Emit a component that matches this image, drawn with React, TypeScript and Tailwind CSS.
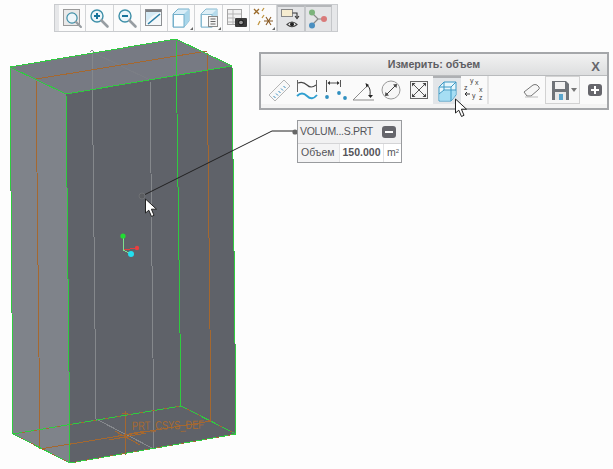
import React from "react";

const green = "#2fcb3f";
const orange = "#a5682f";

// arrow pointer, used twice over the model and the panel
const Cursor = ({ className }: { className: string }) => (
  <svg className={className} width="15" height="21" viewBox="0 0 15 21">
    <path d="M1.5 1 L1.5 15 L4.8 12.2 L7.5 18.5 L10 17.3 L7.4 11.2 L12.5 11.2 Z" fill="#fff" stroke="#222" strokeWidth="1" />
  </svg>
);

const Corner = () => <path d="M24 21 L24 24 L21 24 Z" fill="#666" />;

const Magnifier = ({ sign }: { sign?: "+" | "-" }) => (
  <>
    <circle cx="10" cy="10" r="6" fill="#eef6fa" stroke="#3d8fa8" strokeWidth="1.4" />
    <path d="M14.5 14.5 L20.5 20.5" stroke="#979da2" strokeWidth="2.6" strokeLinecap="round" />
    {sign && <path d="M7 10 H13" stroke="#17739a" strokeWidth="2" />}
    {sign === "+" && <path d="M10 7 V13" stroke="#17739a" strokeWidth="2" />}
  </>
);

const Cube = () => (
  <>
    <path d="M4 8 L9 3 H20 V15 L15 21 H4 Z" fill="#d8edf7" stroke="#74b0cb" strokeWidth="1" />
    <path d="M15 8 L20 3 V15 L15 21 Z" fill="#a9d6ea" />
    <rect x="4.5" y="8.5" width="10.5" height="12.5" fill="#fbfeff" stroke="#74b0cb" />
  </>
);

const topIcons: React.ReactNode[] = [
  <>
    <rect x="3.5" y="3.5" width="16" height="16" fill="#e9e9e9" stroke="#9a9a9a" />
    <g transform="translate(3.5 3.5) scale(0.85)"><Magnifier /></g>
  </>,
  <Magnifier sign="+" />,
  <Magnifier sign="-" />,
  <>
    <rect x="3.5" y="3.5" width="16" height="16" fill="#f4f8fa" stroke="#8c8f92" />
    <path d="M4 4 H19 V6 H4 Z" fill="#7d8084" />
    <path d="M4 6 H19 Q10 8 4 17 Z" fill="#d5ebf6" />
    <path d="M6 18 L18 8" stroke="#2a7fa6" strokeWidth="1.6" />
  </>,
  <>
    <Cube />
    <Corner />
  </>,
  <>
    <g opacity="0.85"><Cube /></g>
    <rect x="11.5" y="10.5" width="9" height="10" fill="#f4f4f4" stroke="#888" />
    <path d="M13.5 13 H18.5 M13.5 15.5 H18.5 M13.5 18 H18.5" stroke="#666" />
    <Corner />
  </>,
  <>
    <rect x="3.5" y="3.5" width="14" height="15" fill="#f2f2f2" stroke="#a5a5a5" />
    <path d="M4 8 H17 M4 12 H11 M4 16 H11 M9 4 V18" stroke="#b5b5b5" />
    <rect x="11" y="12" width="12" height="9" rx="1" fill="#3a3a3a" />
    <circle cx="17" cy="16.5" r="2.4" fill="#999" stroke="#111" />
  </>,
  <>
    <path d="M3 3 L8 8 M8 3 L3 8" stroke="#9a6a2a" strokeWidth="1.3" />
    <path d="M11 5 L13 2 M7 19 L9 15 M11 12 L13 9" stroke="#c09540" strokeWidth="1.3" />
    <path d="M13 15 H22 M15 11 L20 19 M20 11 L15 19" stroke="#8a5a24" strokeWidth="1.1" />
    <Corner />
  </>,
  <>
    <rect x="2.5" y="2.5" width="11" height="7" fill="#f6ecd0" stroke="#888" />
    <path d="M13.5 6 H18 V10 M16 9 L18 11.5 L20 9" fill="none" stroke="#333" strokeWidth="1.1" />
    <path d="M8 17.5 Q13 12.5 18 17.5 Q13 22 8 17.5 Z" fill="#eee" stroke="#444" strokeWidth="1.1" />
    <circle cx="13" cy="17.3" r="2" fill="#222" />
  </>,
  <>
    <path d="M6 6 L12 12 H18 M12 12 L6 18" fill="none" stroke="#888" strokeWidth="1.2" />
    <circle cx="6" cy="5.5" r="3" fill="#7cb37c" />
    <circle cx="6" cy="18.5" r="3" fill="#4a8fc0" />
    <circle cx="18" cy="12" r="3" fill="#d97a7a" />
  </>,
];

const Ruler = () => (
  <>
    <path d="M2 17 L17 2 L23 8 L8 23 Z" fill="#f8f8f8" stroke="#b5b5b5" />
    <path d="M6.5 18 L8.5 20 M9 15.5 L11 17.5 M11.5 13 L13.5 15 M14 10.5 L16 12.5 M16.5 8 L18.5 10" stroke="#3a8fc0" />
  </>
);
const Wave = () => (
  <>
    <path d="M2.5 2 V14 M21.5 2 V14" stroke="#666" />
    <path d="M3 5 Q8 3 12 7 T21 7" fill="none" stroke="#444" strokeWidth="1.1" />
    <path d="M2 18 Q7 13 12 18 T22 17" fill="none" stroke="#2f9fd0" strokeWidth="1.9" />
  </>
);
const Distance = () => (
  <>
    <path d="M3.5 2 V14 M17.5 2 V9 M5 5 H16" stroke="#555" />
    <path d="M7 3 L4.5 5 L7 7 Z M14 3 L16.5 5 L14 7 Z" fill="#333" />
    <circle cx="4" cy="19" r="1.9" fill="#2f8fc0" />
    <circle cx="16" cy="15" r="1.9" fill="#2f8fc0" />
    <circle cx="22" cy="20" r="1.9" fill="#2f8fc0" />
  </>
);
const Angle = () => (
  <>
    <path d="M2 22 L16 8 M2 22 H23" stroke="#8a8a8a" strokeWidth="1" fill="none" />
    <path d="M16 7 Q20 10 19 17" stroke="#333" fill="none" strokeWidth="1" />
    <path d="M14.5 5 L18 7 L15.5 9.5 Z M17 17 H22 L19.5 20 Z" fill="#222" />
  </>
);
const Diameter = () => (
  <>
    <circle cx="12" cy="12" r="9" fill="#f6f6f6" stroke="#999" />
    <path d="M7 17 L17 7" stroke="#444" />
    <path d="M6 18 L6.5 14 L10 17.5 Z M18 6 L17.5 10 L14 6.5 Z" fill="#444" />
  </>
);
const BoxArrows = () => (
  <>
    <rect x="3.5" y="3.5" width="17" height="17" fill="#f6f6f6" stroke="#666" />
    <path d="M6 6 L18 18 M18 6 L6 18" stroke="#555" />
    <path d="M5 5 H8.5 L5 8.5 Z M19 5 H15.5 L19 8.5 Z M5 19 H8.5 L5 15.5 Z M19 19 H15.5 L19 15.5 Z" fill="#444" />
  </>
);
const VolumeCube = () => (
  <>
    <path d="M4 8 L9 3 H21 V16 L16 22 H4 Z" fill="#e6f6fc" stroke="#3b98c4" />
    <path d="M4.5 15 L9 11.5 H20.5 V16 L16 21.5 H4.5 Z" fill="#a6def4" />
    <path d="M4 8 H16 V22 M16 8 L21 3 M9 3 V11 H21 M9 11 L4 15" fill="none" stroke="#3b98c4" />
  </>
);
const Axes = () => (
  <svg width="24" height="24" viewBox="0 0 24 24">
    <path d="M3.5 16 H8 M5 14 L3 16 L5 18" stroke="#333" fill="none" />
    <text fontFamily="'Liberation Sans', sans-serif" fontSize="7" fill="#444">
      <tspan x="8" y="5">y</tspan>
      <tspan x="13" y="7">x</tspan>
      <tspan x="2" y="12">z</tspan>
      <tspan x="10" y="20">y</tspan>
      <tspan x="17" y="14">x</tspan>
      <tspan x="17" y="22">z</tspan>
    </text>
  </svg>
);

const measureIcons = [Ruler, Wave, Distance, Angle, Diameter, BoxArrows, VolumeCube];

const Pill = ({ sign }: { sign: "+" | "-" }) => (
  <span className="relative flex h-[12px] w-[14px] items-center justify-center rounded-[3px] bg-[#66666c]">
    <span className="h-[2px] w-[8px] bg-white" />
    {sign === "+" && <span className="absolute h-[8px] w-[2px] bg-white" />}
  </span>
);

const Model = () => (
  <svg className="absolute inset-0" width="613" height="469" viewBox="0 0 613 469" shapeRendering="crispEdges">
    <polygon points="10,67 176,39 232,66 66,94" fill="#777a83" />
    <polygon points="10,67 66,94 70,463 13,434" fill="#7f838a" />
    <polygon points="66,94 232,66 236,434 70,463" fill="#5f6269" />

    {/* hidden geometry */}
    <g stroke="#85888c" fill="none">
      <path d="M92 52 L96 419 M150 80 L154 449" />
      <path d="M96 419 L154 449" />
      <path d="M92 52 L150 80" opacity="0.3" />
      <path d="M90 52 L92 50 L94 52" />
    </g>

    {/* datum planes */}
    <g stroke={orange} fill="none">
      <path d="M36 79 L207 51 M36 79 L40 449 M207 51 L211 421 M40 449 L211 421 M203 51 H207" />
      <path d="M125 411 V455 M122 413 H128 M108 438 L145 431 M109 440 L146 433 M115 431 L140 445" />
      <path d="M13 434 L70 463 L236 434 L181 406 L13 434" />
    </g>

    {/* edges */}
    <g stroke={green} fill="none">
      <path d="M10 67 L176 39 L232 66 M10 67 L66 94 L232 66" />
      <path d="M10 67 L13 434 M66 94 L70 463 M176 39 L181 406 M232 66 L236 434" />
      <path d="M13 434 L181 406 L236 434 L70 463 L13 434" strokeDasharray="9 3" />
    </g>

    <text
      x="132"
      y="430"
      transform="rotate(-1 132 430)"
      textLength="72"
      lengthAdjust="spacingAndGlyphs"
      fontFamily="'Liberation Sans', sans-serif"
      fontSize="12"
      fill="#a86a30"
    >
      PRT_CSYS_DEF
    </text>

    {/* csys at the centre */}
    <path d="M123 237 V250 L131 254" stroke="#7ee08e" fill="none" />
    <path d="M124 250 L136 248" stroke="#e04040" fill="none" />
    <g shapeRendering="auto">
      <circle cx="123" cy="236" r="2.6" fill="#22dd33" />
      <circle cx="137" cy="248" r="2.2" fill="#e84040" />
      <circle cx="131" cy="254" r="3" fill="#22e0f0" />
      <path d="M142 196 L272 131 H295" stroke="#222" fill="none" />
      <circle cx="142" cy="196" r="3" fill="#5a5c60" stroke="#6e7074" />
      <circle cx="295" cy="132" r="2.6" fill="#666" />
    </g>
  </svg>
);

export default function App() {
  return (
    <div className="relative h-[469px] w-[613px] overflow-hidden bg-[#fdfdfd] font-['Liberation_Sans',sans-serif]">
      <Model />

      {/* main view toolbar */}
      <div className="relative ml-[54px] mt-[4px] flex h-[28px] w-[284px] border border-[#c9cbce] bg-[#e6e7e9] pl-[4px]">
        {topIcons.map((icon, i) => (
          <div
            key={i}
            className={
              i > 7
                ? "flex h-full w-[27.3px] items-center justify-center border-x border-t-2 border-x-[#c4c6c9] border-t-[#b5b7ba] bg-[#e3e4e6]"
                : "flex h-full w-[27.3px] items-center justify-center border-r border-[#d2d4d6] bg-[#fbfbfb]"
            }
          >
            <svg width="24" height="24" viewBox="0 0 24 24">
              {icon}
            </svg>
          </div>
        ))}
      </div>

      {/* measure panel */}
      <div className="relative ml-[259px] mt-[20px] h-[58px] w-[350px] border-2 border-[#a5a7aa] bg-[#f3f3f3]">
        <div className="relative flex h-[21px] items-center justify-center bg-gradient-to-b from-[#f2f2f2] to-[#dddedf] text-[10.7px] font-bold text-[#5d5d62]">
          Измерить: объем
          <span className="absolute right-[7px] top-[3px] text-[13px] text-[#66666c]">X</span>
        </div>
        <div className="flex h-[29px] items-stretch border-t border-[#b9bbbd] bg-[#fafafa] pl-[4px]">
          {measureIcons.map((Icon, i) => (
            <div
              key={i}
              className={
                i === 6
                  ? "flex w-[28px] items-center justify-center border-t-2 border-[#aeb0b3] bg-[#e2e5e8]"
                  : "flex w-[28px] items-center justify-center"
              }
            >
              <svg width="24" height="24" viewBox="0 0 24 24">
                <Icon />
              </svg>
            </div>
          ))}
          <div className="flex w-[28px] items-center justify-center border-r-2 border-[#e4e4e4]">
            <Axes />
          </div>
          <div className="ml-[33px] flex w-[22px] items-center">
            <svg width="20" height="18" viewBox="0 0 20 18">
              <path d="M2 11 L11 4 Q13 3 15 4 L17 6 Q18 8 16 9 L9 15 H5 Z" fill="#f6f6f6" stroke="#777" />
              <path d="M3 16 H16" stroke="#bbb" />
            </svg>
          </div>
          <div className="ml-[1px] flex w-[35px] items-center border border-[#d2d2d2] bg-[#f7f7f7] pl-[5px]">
            <svg width="26" height="22" viewBox="0 0 26 22">
              <path d="M1 2 H15 L18 5 V21 H1 Z" fill="#6f7378" />
              <rect x="4" y="3" width="10" height="7" fill="#f2f2f2" />
              <rect x="4" y="13" width="11" height="8" fill="#e8e8e8" />
              <rect x="8" y="15" width="4" height="6" fill="#5aa5cc" />
              <path d="M20 9 H26 L23 13 Z" fill="#777" />
            </svg>
          </div>
          <div className="ml-[8px] flex items-center">
            <Pill sign="+" />
          </div>
        </div>
      </div>

      {/* leader note */}
      <div className="relative ml-[297px] mt-[10px] w-[105px] border border-[#999b9e] bg-white text-[10.5px] text-[#55555a]">
        <div className="flex h-[22px] items-center justify-between bg-[#f1f1f2] pl-[2px] pr-[5px]">
          <span className="tracking-[-0.3px]">VOLUM...S.PRT</span>
          <Pill sign="-" />
        </div>
        <div className="flex h-[19px] items-center border-t border-[#d4d4d6]">
          <span className="flex h-full w-[41px] items-center bg-[#f4f4f5] pl-[3px]">Объем</span>
          <span className="flex h-full w-[45px] items-center justify-center border-x border-[#e2e2e4] font-bold">150.000</span>
          <span className="pl-[3px]">
            m<sup className="text-[6px]">2</sup>
          </span>
        </div>
      </div>

      <Cursor className="absolute left-[144px] top-[198px]" />
      <Cursor className="absolute left-[454px] top-[98px]" />
    </div>
  );
}
